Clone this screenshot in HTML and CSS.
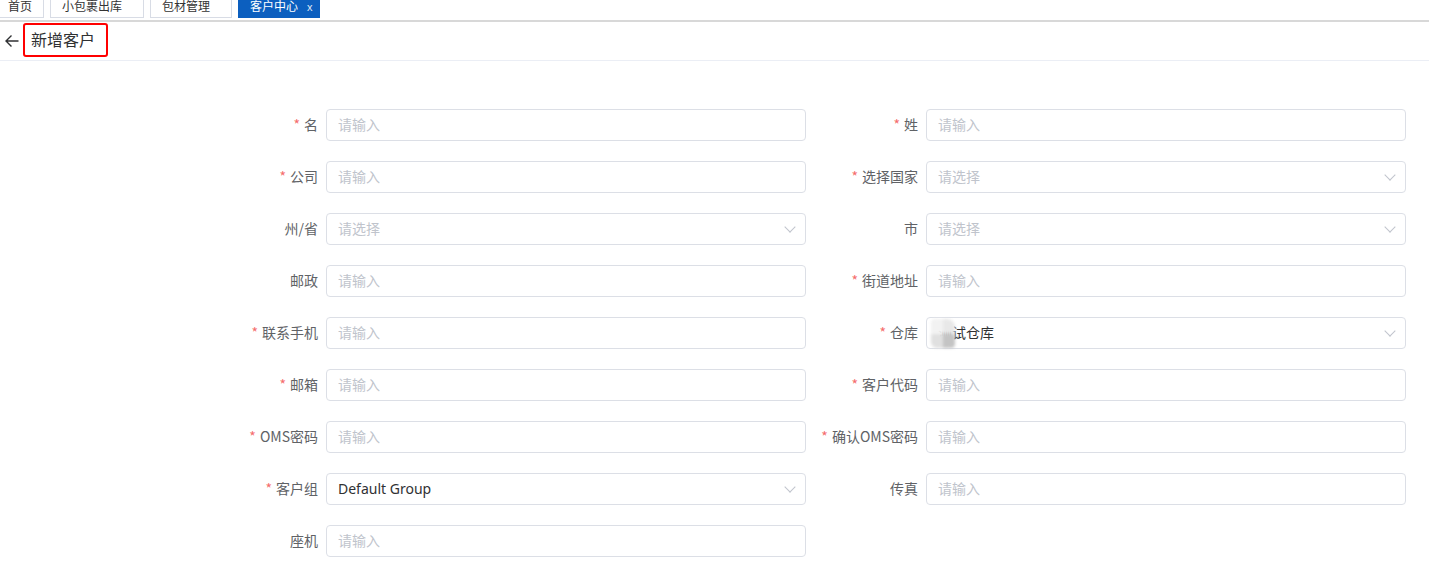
FILE: index.html
```html
<!DOCTYPE html>
<html lang="zh-CN">
<head>
    <meta charset="UTF-8">
    <meta name="viewport" content="width=device-width, initial-scale=1.0">
    <title>新增客户</title>
    <link rel="stylesheet" href="styles.css">
</head>
<body>
    <div class="tabs">
        <div class="tab first">首页</div>
        <div class="tab">小包裹出库</div>
        <div class="tab">包材管理</div>
        <div class="tab active">客户中心<span class="close">x</span></div>
    </div>

    <div class="page-header">
        <svg class="back" width="16" height="16" viewBox="0 0 16 16">
            <path d="M14.5 8H2M7.5 2.5L2 8l5.5 5.5" fill="none" stroke="#303133" stroke-width="1.4"/>
        </svg>
        <div class="title-box">新增客户</div>
    </div>

    <div class="form">
        <div class="form-item">
            <label><i>*</i>名</label>
            <div class="control"><input type="text" placeholder="请输入"></div>
        </div>
        <div class="form-item">
            <label><i>*</i>姓</label>
            <div class="control"><input type="text" placeholder="请输入"></div>
        </div>

        <div class="form-item">
            <label><i>*</i>公司</label>
            <div class="control"><input type="text" placeholder="请输入"></div>
        </div>
        <div class="form-item">
            <label><i>*</i>选择国家</label>
            <div class="control select"><input type="text" placeholder="请选择" readonly><span class="arrow"></span></div>
        </div>

        <div class="form-item">
            <label>州/省</label>
            <div class="control select"><input type="text" placeholder="请选择" readonly><span class="arrow"></span></div>
        </div>
        <div class="form-item">
            <label>市</label>
            <div class="control select"><input type="text" placeholder="请选择" readonly><span class="arrow"></span></div>
        </div>

        <div class="form-item">
            <label>邮政</label>
            <div class="control"><input type="text" placeholder="请输入"></div>
        </div>
        <div class="form-item">
            <label><i>*</i>街道地址</label>
            <div class="control"><input type="text" placeholder="请输入"></div>
        </div>

        <div class="form-item">
            <label><i>*</i>联系手机</label>
            <div class="control"><input type="text" placeholder="请输入"></div>
        </div>
        <div class="form-item">
            <label><i>*</i>仓库</label>
            <div class="control select"><input type="text" value="测试仓库" readonly><span class="arrow"></span><span class="mosaic"></span></div>
        </div>

        <div class="form-item">
            <label><i>*</i>邮箱</label>
            <div class="control"><input type="text" placeholder="请输入"></div>
        </div>
        <div class="form-item">
            <label><i>*</i>客户代码</label>
            <div class="control"><input type="text" placeholder="请输入"></div>
        </div>

        <div class="form-item">
            <label><i>*</i>OMS密码</label>
            <div class="control"><input type="text" placeholder="请输入"></div>
        </div>
        <div class="form-item">
            <label><i>*</i>确认OMS密码</label>
            <div class="control"><input type="text" placeholder="请输入"></div>
        </div>

        <div class="form-item">
            <label><i>*</i>客户组</label>
            <div class="control select"><input type="text" value="Default Group" readonly><span class="arrow"></span></div>
        </div>
        <div class="form-item">
            <label>传真</label>
            <div class="control"><input type="text" placeholder="请输入"></div>
        </div>

        <div class="form-item">
            <label>座机</label>
            <div class="control"><input type="text" placeholder="请输入"></div>
        </div>
    </div>
</body>
</html>
```

FILE: styles.css
```css
* { margin: 0; padding: 0; box-sizing: border-box; }
body { font-family: "Noto Sans", "Noto Sans CJK SC", sans-serif; background: #fff; color: #606266; font-size: 14px; overflow: hidden; }

.tabs { display: flex; align-items: flex-start; gap: 6px; height: 22px; border-bottom: 2px solid #d8d8d8; }
.tab { height: 18px; line-height: 12px; padding: 0 21px 0 11px; font-size: 12px; color: #333; border: 1px solid #d8dce5; border-top: none; background: #fff; font-family: "Noto Sans CJK SC", sans-serif; }
.tab.first { margin-left: -3px; border-left: none; padding-right: 11px; }
.tab.active { background: #0c5fbf; border-color: #0c5fbf; color: #fff; padding-right: 6px; }
.tab .close { font-size: 11px; margin-left: 9px; color: #dfe8f5; font-family: "Liberation Sans", sans-serif; }

.page-header { display: flex; align-items: flex-start; height: 39px; border-bottom: 1px solid #ebeef5; padding: 1px 0 0 4px; }
.back { display: block; margin: 10px 3px 0 0; }
.title-box { border: 2px solid #f00; border-radius: 3px; height: 34px; line-height: 29px; padding: 0 11px 0 6px; font-size: 16px; color: #303133; font-family: "Noto Sans CJK SC", sans-serif; }

.form { display: grid; grid-template-columns: 580px 580px; column-gap: 20px; row-gap: 20px; padding: 48px 0 0 226px; }
.form-item { display: flex; align-items: center; height: 32px; }
.form-item label { display: flex; justify-content: flex-end; flex-shrink: 0; width: 100px; padding: 0 8px 2px 0; font-size: 14px; color: #606266; font-family: "Noto Sans CJK SC", sans-serif; white-space: nowrap; }
.form-item label i { font-style: normal; color: #f56c6c; margin-right: 4px; }
.control { position: relative; width: 480px; height: 32px; }
.control input { width: 100%; height: 32px; border: 1px solid #dcdfe6; border-radius: 4px; padding: 0 12px 2px 11px; font-size: 14px; color: #303133; font-family: "Noto Sans", "Noto Sans CJK SC", sans-serif; outline: none; background: #fff; }
.control input::placeholder { color: #c0c4cc; font-family: "Noto Sans CJK SC", sans-serif; }
.control.select input { padding-right: 30px; }
.arrow { position: absolute; right: 12px; top: 10px; width: 8px; height: 8px; border-right: 1px solid #c0c4cc; border-bottom: 1px solid #c0c4cc; transform: rotate(45deg); }
.mosaic { position: absolute; left: 5px; top: 2px; width: 24px; height: 29px; border-radius: 4px 8px 4px 6px;
    background: linear-gradient(to right, #f2f2f2 50%, #e8e8e8 50%) top / 100% 50% no-repeat,
                linear-gradient(to right, #e0e0e0 50%, #c4c4c4 50%) bottom / 100% 50% no-repeat; filter: blur(1.5px); }
```
